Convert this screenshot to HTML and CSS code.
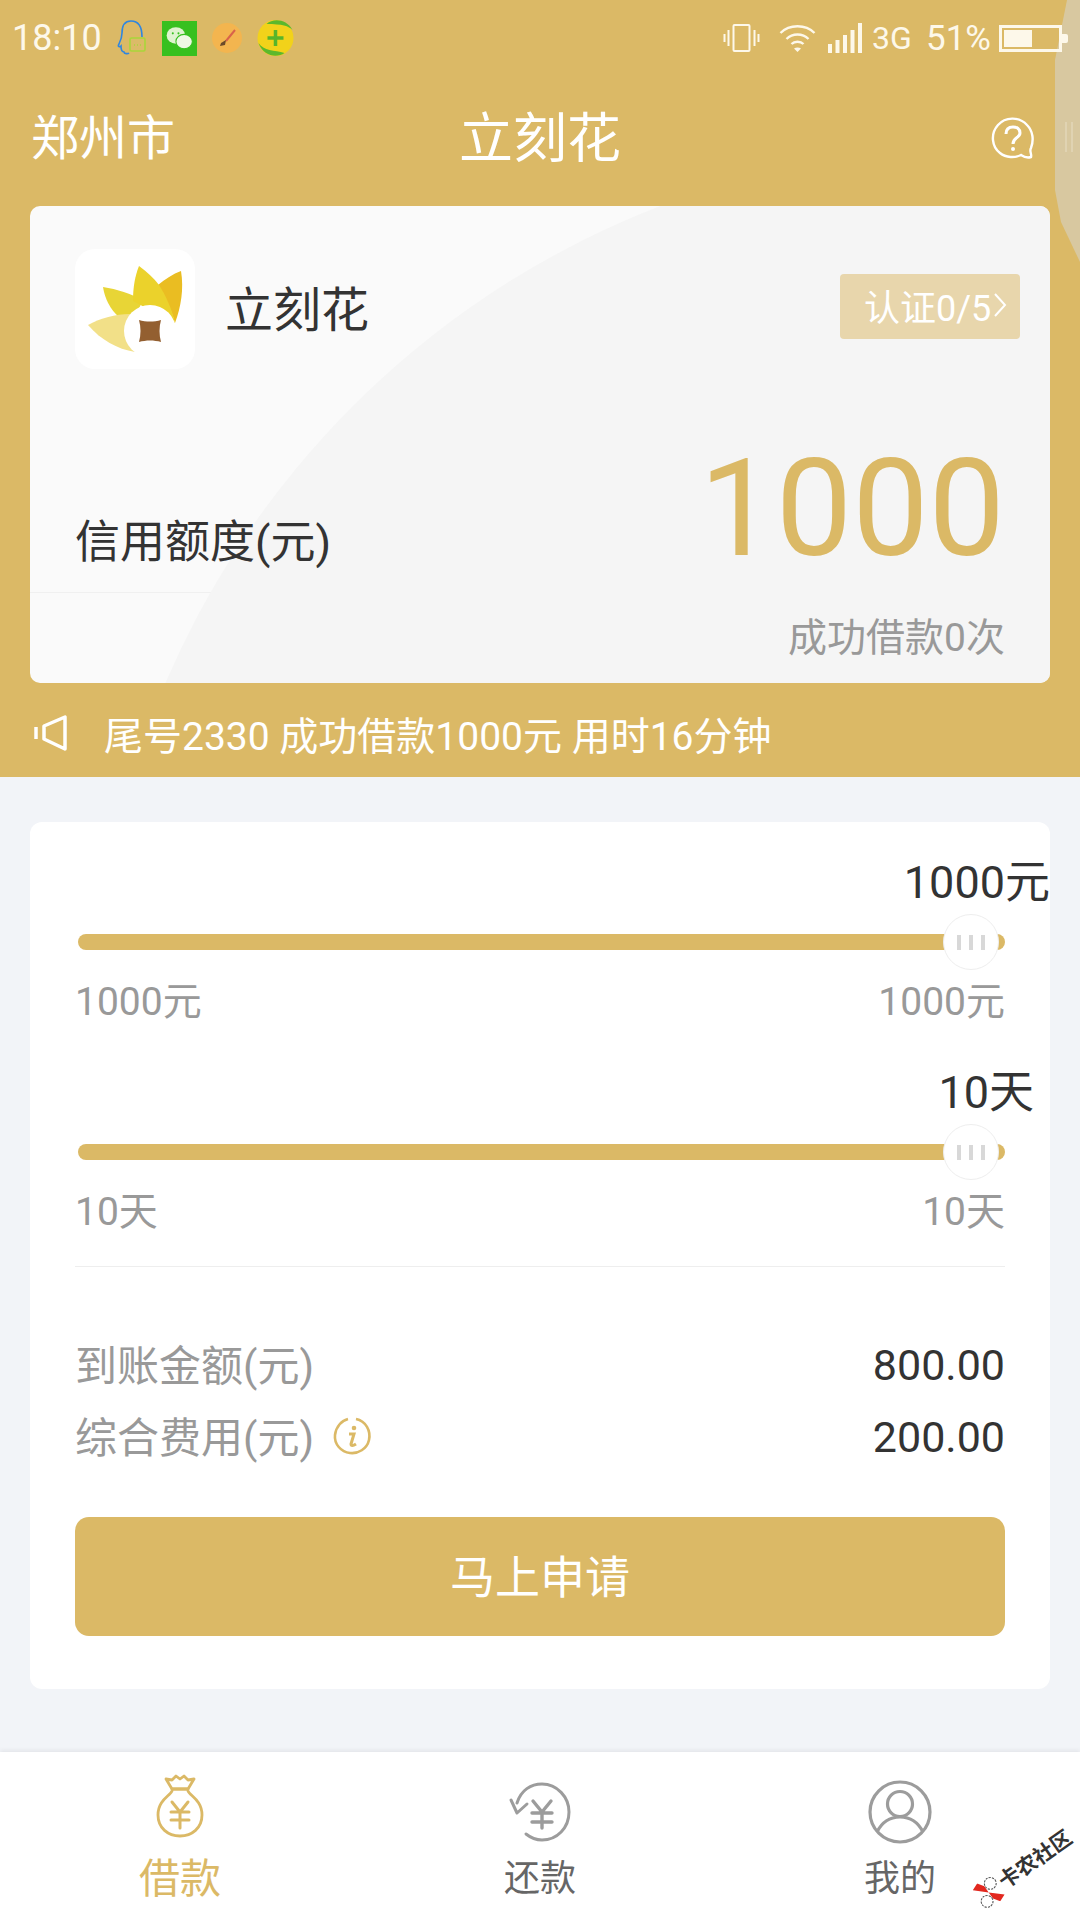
FILE: index.html
```html
<!DOCTYPE html>
<html lang="zh-CN">
	<head>
		<meta charset="UTF-8" />
		<meta name="viewport" content="width=device-width, initial-scale=1.0" />
		<title>立刻花</title>
		<link rel="stylesheet" href="styles.css">
	</head>
	<body>
		<div class="side-handle"><i></i><i></i></div>
		<div class="page">
			<header class="top">
				<div class="status-bar">
					<div class="status-left">
						<span class="time">18:10</span>
						<svg width="30" height="36" viewBox="0 0 30 36" fill="none">
							<path d="M25 17C25 8 22 1 14 1C7 1 5 7 5 13C5 18 4 20 2 24C0 27 3 27 4 26C4 29 5 32 7 32C7 34 11 34 12 33" stroke="#2f86e0" stroke-width="1.6"/>
							<rect x="13" y="18" width="15" height="13" rx="1.5" stroke="#a9d63a" stroke-width="1.6" fill="#dbbb68"/>
							<path d="M17 25h1M20 25h1M23 25h1" stroke="#a9d63a" stroke-width="1.4"/>
						</svg>
						<svg class="ic-wechat" width="35" height="35" viewBox="0 0 34 34">
							<rect width="34" height="34" fill="#37c01f"/>
							<ellipse cx="13.5" cy="14" rx="9" ry="8" fill="#dff3cf"/>
							<ellipse cx="21.500" cy="20" rx="8" ry="7" fill="#eef8e4" stroke="#37c01f"/>
							<circle cx="10.5" cy="12" r="1" fill="#37c01f"/>
							<circle cx="16" cy="12" r="1" fill="#37c01f"/>
						</svg>
						<svg class="ic-brush" width="30" height="30" viewBox="0 0 30 30">
							<circle cx="15" cy="15" r="15" fill="#f3b54f"/>
							<path d="M23 7L14 18" stroke="#d9624a" stroke-width="2"/>
							<path d="M14 17L9 20L8 23L13 22Z" fill="#6b4a2a"/>
						</svg>
						<svg class="ic-360" width="37" height="38" viewBox="0 0 36 38">
							<circle cx="18" cy="19" r="18" fill="#f2d21a"/>
							<path d="M9 5C16 -1 29 0 35 11C31 7 25 5 9 5ZM1 24C6 32 17 31 27 34C20 39 6 38 1 24Z" fill="#5cb82c"/>
							<path d="M18 11V27M10 19H26" stroke="#57b52a" stroke-width="3.5"/>
						</svg>
					</div>
					<div class="status-right">
						<svg width="37" height="30" viewBox="0 0 36 30" fill="none" stroke="#fdf8ea" stroke-width="2">
							<rect x="10" y="2" width="16" height="26" rx="1"/>
							<path d="M5 7V23M1 11V19M31 7V23M35 11V19"/>
						</svg>
						<svg class="ic-wifi" width="39" height="30" viewBox="0 0 38 30" fill="none" stroke="#fdf8ea" stroke-width="2.4">
							<path d="M2 10C11 1 27 1 36 10M8 16C14 10 24 10 30 16M13 21C16 18 22 18 25 21"/>
							<path d="M19 29L15.5 25.5C17.5 24 20.5 24 22.5 25.5Z" fill="#fdf8ea" stroke="none"/>
						</svg>
						<svg class="ic-signal" width="34" height="30" viewBox="0 0 34 30" fill="#fdf8ea">
							<rect x="0" y="21" width="4" height="9"/>
							<rect x="7.500" y="17" width="4" height="13"/>
							<rect x="15" y="12" width="4" height="18"/>
							<rect x="22.500" y="7" width="4" height="23"/>
							<rect x="30" y="0" width="4" height="30"/>
						</svg>
						<span class="net">3G</span>
						<span class="pct">51%</span>
						<div class="battery">
							<div class="battery-body">
								<div class="battery-fill"></div>
							</div>
							<div class="battery-cap"></div>
						</div>
					</div>
				</div>
				<div class="title-row">
					<span class="city">郑州市</span>
					<h1 class="title">立刻花</h1>
					<svg class="help" width="44" height="44" viewBox="0 0 44 44" fill="none" stroke="#fff" stroke-width="2.4">
						<path d="M40 32C43 24 42 15 36 9C28 0 14 1 7 9C-1 18 1 31 9 37C15 42 24 42 30 39C33 41 37 42 40 41C41 38 38 35 40 32Z"/>
						<path d="M15 18C15 13 18 11 22 11C26 11 29 13 29 17C29 22 22 21 22 28" stroke-width="3"/>
						<circle cx="22" cy="33" r="2" fill="#fff" stroke="none"/>
					</svg>
				</div>
				<section class="credit-card">
					<div class="credit-curve"></div>
					<div class="credit-main">
						<div class="brand-row">
							<div class="logo">
								<svg width="120" height="120" viewBox="0 0 120 120">
									<path d="M28 38C42 40 56 45 68 51L60 68L44 68C35 60 30 50 28 38Z" fill="#e8d536"/>
									<path d="M106 22C109 40 106 58 100 74C96 60 90 47 83 36C90 30 98 25 106 22Z" fill="#eabd22"/>
									<path d="M64 17C72 23 79 29 84 36C91 47 97 60 100 74L88 68L58 52C58 38 60 27 64 17Z" fill="#ebd22b"/>
									<path d="M13 76C26 69 40 65 55 65L65 90L60 103C42 100 26 91 13 76Z" fill="#f2e088"/>
									<circle cx="75" cy="82" r="26" fill="#fff"/>
									<path d="M64 71C71 73 79 73 86 71C84 78 84 86 86 93C79 91 71 91 64 93C66 86 66 78 64 71Z" fill="#935f30"/>
								</svg>
							</div>
							<span class="brand-name">立刻花</span>
							<div class="auth-badge">
								<span>认证0/5</span>
								<svg width="14" height="26" viewBox="0 0 14 26" fill="none" stroke="#fff" stroke-width="2">
									<path d="M2 2L12 13L2 24"/>
								</svg>
							</div>
						</div>
						<div class="limit-row">
							<span class="limit-label">信用额度(元)</span>
							<span class="limit-value">1000</span>
						</div>
					</div>
					<div class="credit-foot">成功借款0次</div>
				</section>
				<div class="notice">
					<svg width="34" height="36" viewBox="0 0 34 36" fill="none" stroke="#fff" stroke-width="3.500" stroke-linejoin="round">
						<path d="M10 11L31 2V34L10 24Z"/>
						<path d="M2 12V24"/>
					</svg>
					<span>尾号2330 成功借款1000元 用时16分钟</span>
				</div>
			</header>

			<main class="content">
				<section class="loan-card">
					<div class="slider-block">
						<div class="slider-value amount">1000元</div>
						<div class="slider">
							<div class="slider-track"></div>
							<div class="slider-thumb"><i></i><i></i><i></i></div>
						</div>
						<div class="slider-range"><span>1000元</span><span>1000元</span></div>
					</div>
					<div class="slider-block second">
						<div class="slider-value days">10天</div>
						<div class="slider">
							<div class="slider-track"></div>
							<div class="slider-thumb"><i></i><i></i><i></i></div>
						</div>
						<div class="slider-range"><span>10天</span><span>10天</span></div>
					</div>
					<div class="summary">
						<div class="summary-row">
							<span class="summary-label">到账金额(元)</span>
							<span class="summary-value">800.00</span>
						</div>
						<div class="summary-row">
							<span class="summary-label">综合费用(元)
								<svg class="info" width="40" height="40" viewBox="0 0 40 40" fill="none">
									<path d="M24 3C34 5 39 15 37 24C35 33 26 38 18 37C9 36 2 28 3 19C4 11 9 5 16 3" stroke="#dbb966" stroke-width="2.6"/>
									<circle cx="22" cy="12" r="2.300" fill="#dbb966"/>
									<path d="M17 18H22L19 28C19 30 21 30 24 28" stroke="#dbb966" stroke-width="3"/>
								</svg>
							</span>
							<span class="summary-value">200.00</span>
						</div>
					</div>
					<button class="apply-btn" type="button">马上申请</button>
				</section>
			</main>

			<nav class="tabbar">
				<div class="tab active">
					<svg width="48" height="64" viewBox="0 0 48 64" fill="none" stroke="#dbb966" stroke-width="2.8" stroke-linecap="round" stroke-linejoin="round">
						<path d="M16 15H32L38 5L32 6L28 2L24 5L20 2L16 6L10 5Z"/>
						<path d="M16 15L32 15M16 17C14 22 2 26 2 41C2 54 12 62 24 62C36 62 46 54 46 41C46 26 34 22 32 17"/>
						<path d="M16 28L24 38L32 28M15 38H33M15 46H33M24 38V54" stroke-width="3"/>
					</svg>
					<span>借款</span>
				</div>
				<div class="tab">
					<svg width="62" height="60" viewBox="0 0 62 60" fill="none" stroke="#9c9c9c" stroke-width="3" stroke-linecap="round" stroke-linejoin="round">
						<path d="M8 21C12 8 22 2 33 2C48 2 60 15 60 30C60 46 48 58 33 58C27 58 22 56 17 52"/>
						<path d="M2 18L8 31L18 22"/>
						<path d="M24 19L33 30L42 19M23 31H43M23 40H43M33 30V46" stroke-width="3.400"/>
					</svg>
					<span>还款</span>
				</div>
				<div class="tab">
					<svg width="64" height="64" viewBox="0 0 64 64" fill="none" stroke="#9c9c9c" stroke-width="3.200">
						<circle cx="32" cy="32" r="30"/>
						<circle cx="32" cy="24" r="12.500"/>
						<path d="M9 52C14 42 22 37 32 37C42 37 50 42 55 52"/>
					</svg>
					<span>我的</span>
				</div>
			</nav>
		</div>

		<div class="watermark">
			<svg width="28" height="28" viewBox="0 0 26 26">
				<path d="M13 13L2 3L9 0L13 6ZM13 13L24 23L17 26L13 20Z" fill="#e2281f"/>
				<circle cx="19" cy="7" r="5.500" fill="#fff" stroke="#555" stroke-dasharray="2 1"/>
				<circle cx="7" cy="19" r="5.500" fill="#fff" stroke="#555" stroke-dasharray="2 1"/>
			</svg>
			<span>卡农社区</span>
		</div>
	</body>
</html>
```

FILE: styles.css
```css
* {
	box-sizing: border-box;
}
body {
	margin: 0;
	background: #f2f4f8;
	font-family: Roboto, "Noto Sans CJK SC", sans-serif;
	overflow: hidden;
}
.page {
	width: 1080px;
	height: 1920px;
	display: flex;
	flex-direction: column;
}
.top {
	height: 777px;
	background: #dbb966;
	color: #fff;
	padding: 0 30px;
}

/* status bar */
.status-bar {
	position: relative;
	z-index: 2;
	height: 76px;
	margin: 0 -30px;
	padding: 0 12px;
	display: flex;
	align-items: center;
	justify-content: space-between;
	color: #fdf8ea;
}
.status-left,
.status-right {
	display: flex;
	align-items: center;
}
.time {
	font-size: 36px;
	width: 105px;
}
.ic-wechat,
.ic-brush,
.ic-360 {
	margin-left: 15px;
}
.ic-wifi {
	margin-left: 18px;
}
.ic-signal {
	margin-left: 11px;
}
.net {
	font-size: 32px;
	margin-left: 10px;
	width: 40px;
}
.pct {
	font-size: 35px;
	margin-left: 14px;
	width: 65px;
}
.battery {
	display: flex;
	align-items: center;
	margin-left: 8px;
}
.battery-body {
	width: 63px;
	height: 27px;
	border: 3px solid #fdf8ea;
	padding: 2px;
}
.battery-fill {
	width: 28px;
	height: 100%;
	background: #fdf8ea;
}
.battery-cap {
	width: 6px;
	height: 9px;
	background: #fdf8ea;
	border-radius: 0 2px 2px 0;
}

/* title */
.title-row {
	position: relative;
	z-index: 2;
	height: 124px;
	margin: 0 1px 6px;
	display: grid;
	grid-template-columns: 1fr auto 1fr;
	align-items: center;
}
.city {
	font-size: 48px;
	margin-bottom: 8px;
}
.title {
	margin: 0 0 8px;
	font-size: 54px;
	font-weight: 400;
}
.help {
	justify-self: end;
	margin-right: 14px;
}

/* credit card */
.credit-card {
	position: relative;
	height: 477px;
	background: #fafafa;
	border-radius: 10px;
	overflow: hidden;
}
.credit-card::before {
	content: "";
	position: absolute;
	left: 0;
	right: 0;
	top: 386px;
	height: 1px;
	background: #f0f0f0;
}
.credit-curve {
	position: absolute;
	left: 64px;
	top: -59px;
	width: 1768px;
	height: 1768px;
	border-radius: 50%;
	background: #f5f5f5;
}
.credit-main {
	position: relative;
	height: 387px;
	padding: 43px 30px 0 45px;
}
.brand-row {
	display: flex;
	align-items: center;
}
.logo {
	width: 120px;
	height: 120px;
	background: #fff;
	border-radius: 20px;
}
.logo svg {
	display: block;
}
.brand-name {
	margin-left: 30px;
	margin-bottom: 6px;
	font-size: 48px;
	color: #333;
}
.auth-badge {
	margin-left: auto;
	margin-bottom: 6px;
	width: 180px;
	height: 65px;
	padding-left: 24px;
	padding-bottom: 2px;
	display: flex;
	align-items: center;
	gap: 2px;
	background: #e8d6ac;
	border-radius: 4px;
	font-size: 36px;
	color: #fff;
}
.limit-row {
	margin-top: 65px;
	padding-right: 15px;
	display: flex;
	align-items: flex-end;
	justify-content: space-between;
}
.limit-label {
	font-size: 45px;
	color: #333;
	margin-bottom: 13px;
}
.limit-value {
	font-size: 136px;
	line-height: 150px;
	color: #dbb966;
}
.credit-foot {
	position: relative;
	height: 90px;
	padding: 0 45px 8px 0;
	display: flex;
	align-items: center;
	justify-content: flex-end;
	font-size: 39px;
	color: #999;
}
.notice {
	height: 94px;
	padding-left: 4px;
	padding-top: 6px;
	display: flex;
	align-items: center;
	gap: 36px;
	font-size: 39px;
}

/* loan card */
.content {
	flex: 1;
	padding: 45px 30px 0;
}
.loan-card {
	height: 867px;
	background: #fff;
	border-radius: 12px;
	padding: 35px 45px 0;
}
.slider-block.second {
	margin-top: 40px;
}
.slider-value {
	font-size: 45px;
	line-height: 52px;
	color: #333;
	text-align: right;
}
.slider-value.amount {
	margin-right: -45px;
}
.slider-value.days {
	margin-right: -29px;
}
.slider {
	position: relative;
	height: 56px;
	margin-top: 5px;
	margin-left: 3px;
	display: flex;
	align-items: center;
}
.slider-track {
	width: 100%;
	height: 16px;
	border-radius: 8px;
	background: #dbb966;
}
.slider-thumb {
	position: absolute;
	right: 6px;
	top: 0;
	width: 56px;
	height: 56px;
	display: flex;
	align-items: center;
	justify-content: center;
	gap: 8px;
	background: #fff;
	border: 1px solid #eee;
	border-radius: 50%;
}
.slider-thumb i {
	width: 4px;
	height: 15px;
	background: #d8d8d8;
}
.slider-range {
	margin-top: 7px;
	display: flex;
	justify-content: space-between;
	font-size: 39px;
	line-height: 50px;
	color: #999;
}
.summary {
	margin-top: 29px;
	padding-top: 59px;
	border-top: 1px solid #eee;
}
.summary-row {
	height: 72px;
	display: flex;
	align-items: center;
	justify-content: space-between;
	font-size: 42px;
}
.summary-label {
	display: flex;
	align-items: center;
	gap: 18px;
	color: #999;
}
.info {
	margin-top: 4px;
}
.summary-value {
	margin-top: 6px;
	font-size: 43px;
	color: #333;
}
.apply-btn {
	display: block;
	width: 100%;
	height: 119px;
	margin-top: 47px;
	padding-bottom: 6px;
	border: 0;
	border-radius: 14px;
	background: #dbb966;
	color: #fff;
	font-family: inherit;
	font-size: 45px;
}

/* tabs */
.tabbar {
	height: 168px;
	background: #fff;
	box-shadow: 0 -2px 4px #0000000f;
	display: grid;
	grid-template-columns: repeat(3, 1fr);
}
.tab {
	display: flex;
	flex-direction: column;
	align-items: center;
	padding-top: 28px;
	font-size: 36px;
	line-height: 50px;
	color: #666;
}
.tab svg {
	height: 64px;
}
.tab span {
	margin-top: 10px;
}
.tab.active {
	padding-top: 22px;
	font-size: 41px;
	color: #dbb966;
}
.tab.active span {
	margin-top: 16px;
}

/* overlays */
.side-handle {
	position: absolute;
	z-index: 1;
	top: 0;
	left: 1055px;
	width: 25px;
	height: 262px;
	background: #d8c8a0;
	clip-path: polygon(12px 0, 100% 0, 100% 100%, 6px 222px, 0 190px, 0 60px);
}
.side-handle i {
	position: absolute;
	top: 122px;
	width: 2px;
	height: 30px;
	background: #e0d3b2;
}
.side-handle i:first-child {
	left: 10px;
}
.side-handle i:last-child {
	left: 16px;
}
.watermark {
	position: absolute;
	z-index: 3;
	left: 967px;
	top: 1853px;
	display: flex;
	align-items: center;
	gap: 1px;
	white-space: nowrap;
	transform: rotate(-35deg);
	font-size: 21px;
	line-height: 30px;
	font-weight: 700;
	color: #333;
}
```
